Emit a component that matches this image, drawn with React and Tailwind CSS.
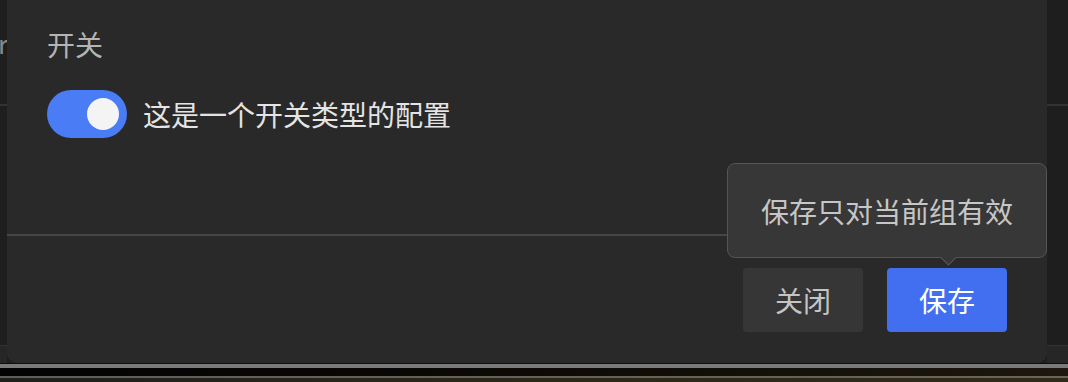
import React from "react";

const font = { fontFamily: '"Noto Sans CJK SC", "Noto Sans", sans-serif' };

const SideStrip = ({ className, children }) => (
  <div className={`flex flex-col overflow-hidden ${className}`}>
    <div className="h-[104px] bg-[#1e1e1e] shrink-0 relative">{children}</div>
    <div className="h-[2px] bg-[#333333] shrink-0"></div>
    <div className="h-[239px] bg-[#1e1e1e] shrink-0"></div>
    <div className="h-[1px] bg-[#333333] shrink-0"></div>
    <div className="flex-1 bg-[#262626]"></div>
  </div>
);

export default function App() {
  return (
    <div
      className="w-[1068px] h-[382px] overflow-hidden bg-[#1e1e1e] flex flex-col relative"
      style={font}
    >
      <div className="flex h-[363px] shrink-0">
        <SideStrip className="w-[7px]">
          <span className="absolute top-[27px] right-[-1px] text-[26px] leading-[32px] text-[#8a8a8a]">
            r
          </span>
        </SideStrip>

        {/* dialog */}
        <div className="w-[1040px] bg-[#292929] rounded-b-[10px] flex flex-col">
          <div className="h-[234px] pl-[40px] pt-[24px] flex flex-col">
            <p className="text-[28px] leading-[40px] text-[#b4b4b4]">开关</p>
            <div className="mt-[26px] flex items-center gap-[16px] h-[48px]">
              <div className="w-[80px] h-[48px] rounded-full bg-[#4a7cf5] flex items-center justify-end pr-[8px]">
                <div className="w-[32px] h-[32px] rounded-full bg-[#f4f4f4]"></div>
              </div>
              <span className="text-[28px] leading-[40px] text-[#e4e4e4]">
                这是一个开关类型的配置
              </span>
            </div>
          </div>
          <div className="h-[2px] bg-[#454545]"></div>
          <div className="flex justify-end gap-[24px] pt-[32px] pr-[40px]">
            <button className="w-[120px] h-[64px] rounded-[4px] bg-[#363636] text-[28px] text-[#c4c4c4]">
              关闭
            </button>
            <button className="w-[120px] h-[64px] rounded-[4px] bg-[#426ff0] text-[28px] text-white">
              保存
            </button>
          </div>
        </div>

        <SideStrip className="w-[21px]" />
      </div>

      {/* bottom strip */}
      <div className="flex flex-col flex-1">
        <div className="h-[1px] bg-[#0e0e0e]"></div>
        <div className="h-[4px] bg-[#7a7a7a]"></div>
        <div className="h-[8px] bg-gradient-to-r from-[#030303] via-[#0d0a06] to-[#1c1810]"></div>
        <div className="h-[2px] bg-gradient-to-r from-[#5e5e5e] to-[#6a6450]"></div>
        <div className="flex-1 bg-gradient-to-r from-[#1f1f1c] via-[#2c2818] to-[#2f2a1a]"></div>
      </div>

      {/* tooltip */}
      <div className="absolute left-[727px] top-[163px] w-[320px] h-[95px] rounded-[8px] bg-[#373737] border border-[#555555] flex items-center justify-center">
        <span className="text-[28px] leading-[40px] text-[#c6c6c6]">保存只对当前组有效</span>
        <div className="absolute left-[211px] bottom-[-10px] w-[18px] h-[10px] overflow-hidden">
          <div className="w-[13px] h-[13px] bg-[#373737] border border-[#555555] rotate-45 mx-auto -mt-[7px]"></div>
        </div>
      </div>
    </div>
  );
}
